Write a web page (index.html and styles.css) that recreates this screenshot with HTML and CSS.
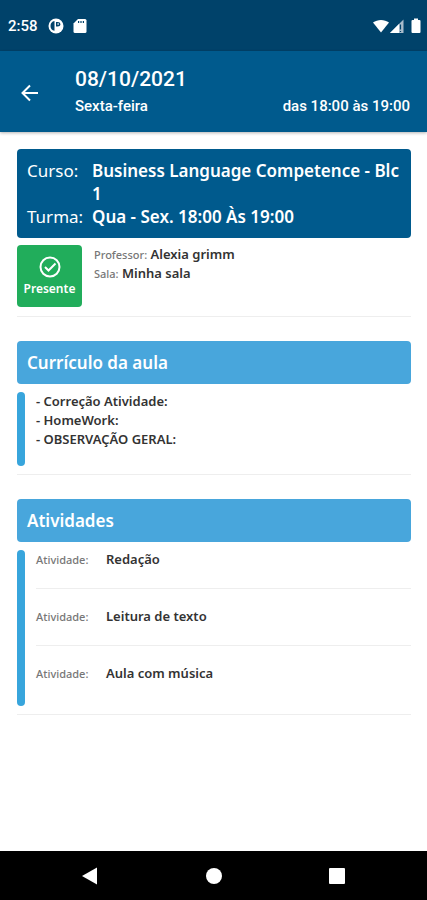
FILE: index.html
```html
<!DOCTYPE html>
<html lang="pt-BR">
<head>
  <meta charset="UTF-8" />
  <meta name="viewport" content="width=device-width, initial-scale=1.0" />
  <title>Aula 08/10/2021</title>
  <link rel="stylesheet" href="styles.css">
</head>
<body>

  <div class="status-bar">
    <span class="clock">2:58</span>
    <svg class="status-app" width="16" height="16" viewBox="0 0 16 16">
      <circle cx="8" cy="8" r="7.5" fill="#fff" />
      <path d="M6.500 3v9.800A5 5 0 0 1 6.500 3z" fill="#00426a" />
      <path d="M8 4v4.500h1.500q2.800 0 2.800-2.200T9.500 4z" fill="#00426a" />
      <path d="M9.600 5v2h1V5z" fill="#fff" />
    </svg>
    <svg width="14" height="16" viewBox="0 0 14 16">
      <path d="M5 1h7a1.500 1.500 0 0 1 1.500 1.500v11A1.500 1.500 0 0 1 12 15H2a1.500 1.500 0 0 1-1.500-1.500V5.500z" fill="#fff" />
      <path d="M5 3h1.200v2H5zM7.400 3h1.200v2H7.400zM9.800 3H11v2H9.800z" fill="#00426a" />
    </svg>
    <div class="status-right">
      <svg width="16" height="16" viewBox="0 0 16 16">
        <path d="M0 4.500C4.500 1 11.500 1 16 4.500L8 14.500z" fill="#fff" />
      </svg>
      <svg width="16" height="16" viewBox="0 0 16 16">
        <path d="M1 15L14.500 1.500V15z" fill="#a9bccb" />
        <path d="M1 15L10 6v9z" fill="#fff" />
        <path d="M11.500 6.500v5M11.500 13v1" stroke="#00426a" stroke-width="1.200" />
      </svg>
      <svg class="battery" width="10" height="16" viewBox="0 0 10 16">
        <path d="M3 .5h4V2h1.500q1 0 1 1v11q0 1-1 1h-7q-1 0-1-1V3q0-1 1-1H3z" fill="#fff" />
      </svg>
    </div>
  </div>

  <header class="app-bar">
    <button class="back" aria-label="Voltar">
      <svg width="18" height="18" viewBox="0 0 18 18">
        <path d="M17 9H2M9 1.500L1.500 9L9 16.500" fill="none" stroke="#fff" stroke-width="2" />
      </svg>
    </button>
    <div class="heading">
      <h1>08/10/2021</h1>
      <div class="subtitle">
        <span>Sexta-feira</span>
        <span>das 18:00 às 19:00</span>
      </div>
    </div>
  </header>

  <main class="content">
    <dl class="course">
      <dt>Curso:</dt>
      <dd>Business Language Competence - Blc 1</dd>
      <dt>Turma:</dt>
      <dd>Qua - Sex. 18:00 Às 19:00</dd>
    </dl>

    <div class="info">
      <div class="presence">
        <svg width="24" height="24" viewBox="0 0 24 24">
          <circle cx="12" cy="12" r="9.500" fill="none" stroke="#fff" stroke-width="2" />
          <path d="M7 12l3.500 3.500L17.500 8.500" fill="none" stroke="#fff" stroke-width="2" />
        </svg>
        <span>Presente</span>
      </div>
      <div class="teacher">
        <p><span class="label">Professor:</span> Alexia grimm</p>
        <p><span class="label">Sala:</span> Minha sala</p>
      </div>
    </div>

    <section>
      <h2>Currículo da aula</h2>
      <div class="block">
        <div class="lines">
          <p>- Correção Atividade:</p>
          <p>- HomeWork:</p>
          <p>- OBSERVAÇÃO GERAL:</p>
        </div>
      </div>
    </section>

    <section>
      <h2>Atividades</h2>
      <div class="block">
        <ul class="activities">
          <li><span class="label">Atividade:</span><span>Redação</span></li>
          <li><span class="label">Atividade:</span><span>Leitura de texto</span></li>
          <li><span class="label">Atividade:</span><span>Aula com música</span></li>
        </ul>
      </div>
    </section>
  </main>

  <nav class="nav-bar">
    <button aria-label="Voltar">
      <svg width="18" height="18" viewBox="0 0 18 18"><path d="M1 9L16 .5v17z" fill="#fff" /></svg>
    </button>
    <button aria-label="Início">
      <svg width="18" height="18" viewBox="0 0 18 18"><circle cx="9" cy="9" r="8" fill="#fff" /></svg>
    </button>
    <button aria-label="Recentes">
      <svg width="18" height="18" viewBox="0 0 18 18"><rect x="1" y="1" width="16" height="16" rx="1" fill="#fff" /></svg>
    </button>
  </nav>

</body>
</html>
```

FILE: styles.css
```css
* {
  box-sizing: border-box;
}
body {
  display: flex;
  flex-direction: column;
  min-height: 100vh;
  margin: 0;
  background: #fff;
  color: #333;
  font-family: "Noto Sans", sans-serif;
}
h1, h2, p, dl, dd, ul {
  margin: 0;
  padding: 0;
}
svg {
  display: block;
}
button {
  padding: 0;
  border: none;
  background: none;
  cursor: pointer;
}
.status-bar {
  display: flex;
  align-items: center;
  padding: 18px 6px 17px 8px;
  background: #00426a;
  color: #fff;
  font: 500 15px/16px Roboto, sans-serif;
}
.status-app {
  margin: 0 9px 0 10px;
}
.status-right {
  display: flex;
  margin-left: auto;
}
.battery {
  margin-left: 6px;
}
.app-bar {
  display: flex;
  align-items: center;
  padding: 14px 17px 12px 21px;
  background: #005a8d;
  color: #fff;
  font-family: Roboto, sans-serif;
  box-shadow: 0 1px 3px rgba(0,0,0,0.3);
}
.heading {
  flex: 1;
  margin-left: 36px;
}
.heading h1 {
  font-size: 21px;
  line-height: 28px;
  font-weight: 500;
}
.subtitle {
  display: flex;
  justify-content: space-between;
  font-size: 15px;
  line-height: 27px;
  font-weight: 500;
}
.content {
  flex: 1;
  padding: 17px 16px 17px 17px;
}
.course {
  display: grid;
  grid-template-columns: 65px 1fr;
  padding: 10px;
  border-radius: 4px;
  background: #005a8d;
  color: #fff;
  font-size: 17px;
  line-height: 23px;
}
.course dd {
  font-weight: 600;
}
.info {
  display: flex;
  gap: 12px;
  padding: 7px 0 9px;
  border-bottom: 1px solid #eee;
}
.presence {
  display: flex;
  flex-direction: column;
  align-items: center;
  width: 65px;
  padding: 10px 0 8px;
  border-radius: 4px;
  background: #21ad5b;
  color: #fff;
  font-size: 12px;
  line-height: 20px;
  font-weight: 600;
}
.teacher {
  font-size: 13px;
  line-height: 19px;
  font-weight: 600;
}
.label {
  color: #777;
  font-size: 11px;
  font-weight: 500;
}
section {
  margin-top: 24px;
  border-bottom: 1px solid #eee;
}
h2 {
  padding: 10px;
  border-radius: 4px;
  background: #48a6dc;
  color: #fff;
  font-size: 17px;
  line-height: 23px;
  font-weight: 600;
}
.block {
  display: flex;
  gap: 11px;
  padding: 8px 0;
  font-size: 13px;
  line-height: 19px;
  font-weight: 600;
}
.block::before {
  content: "";
  width: 8px;
  border-radius: 4px;
  background: #38a5dc;
}
.lines {
  padding-bottom: 17px;
}
.activities {
  flex: 1;
  padding-bottom: 4px;
  list-style: none;
}
.activities li {
  display: flex;
  padding-bottom: 19px;
}
.activities li + li {
  padding-top: 18px;
  border-top: 1px solid #eee;
}
.activities .label {
  width: 70px;
}
.nav-bar {
  display: flex;
  justify-content: space-between;
  padding: 16px 81px 15px;
  background: #000;
}
```
